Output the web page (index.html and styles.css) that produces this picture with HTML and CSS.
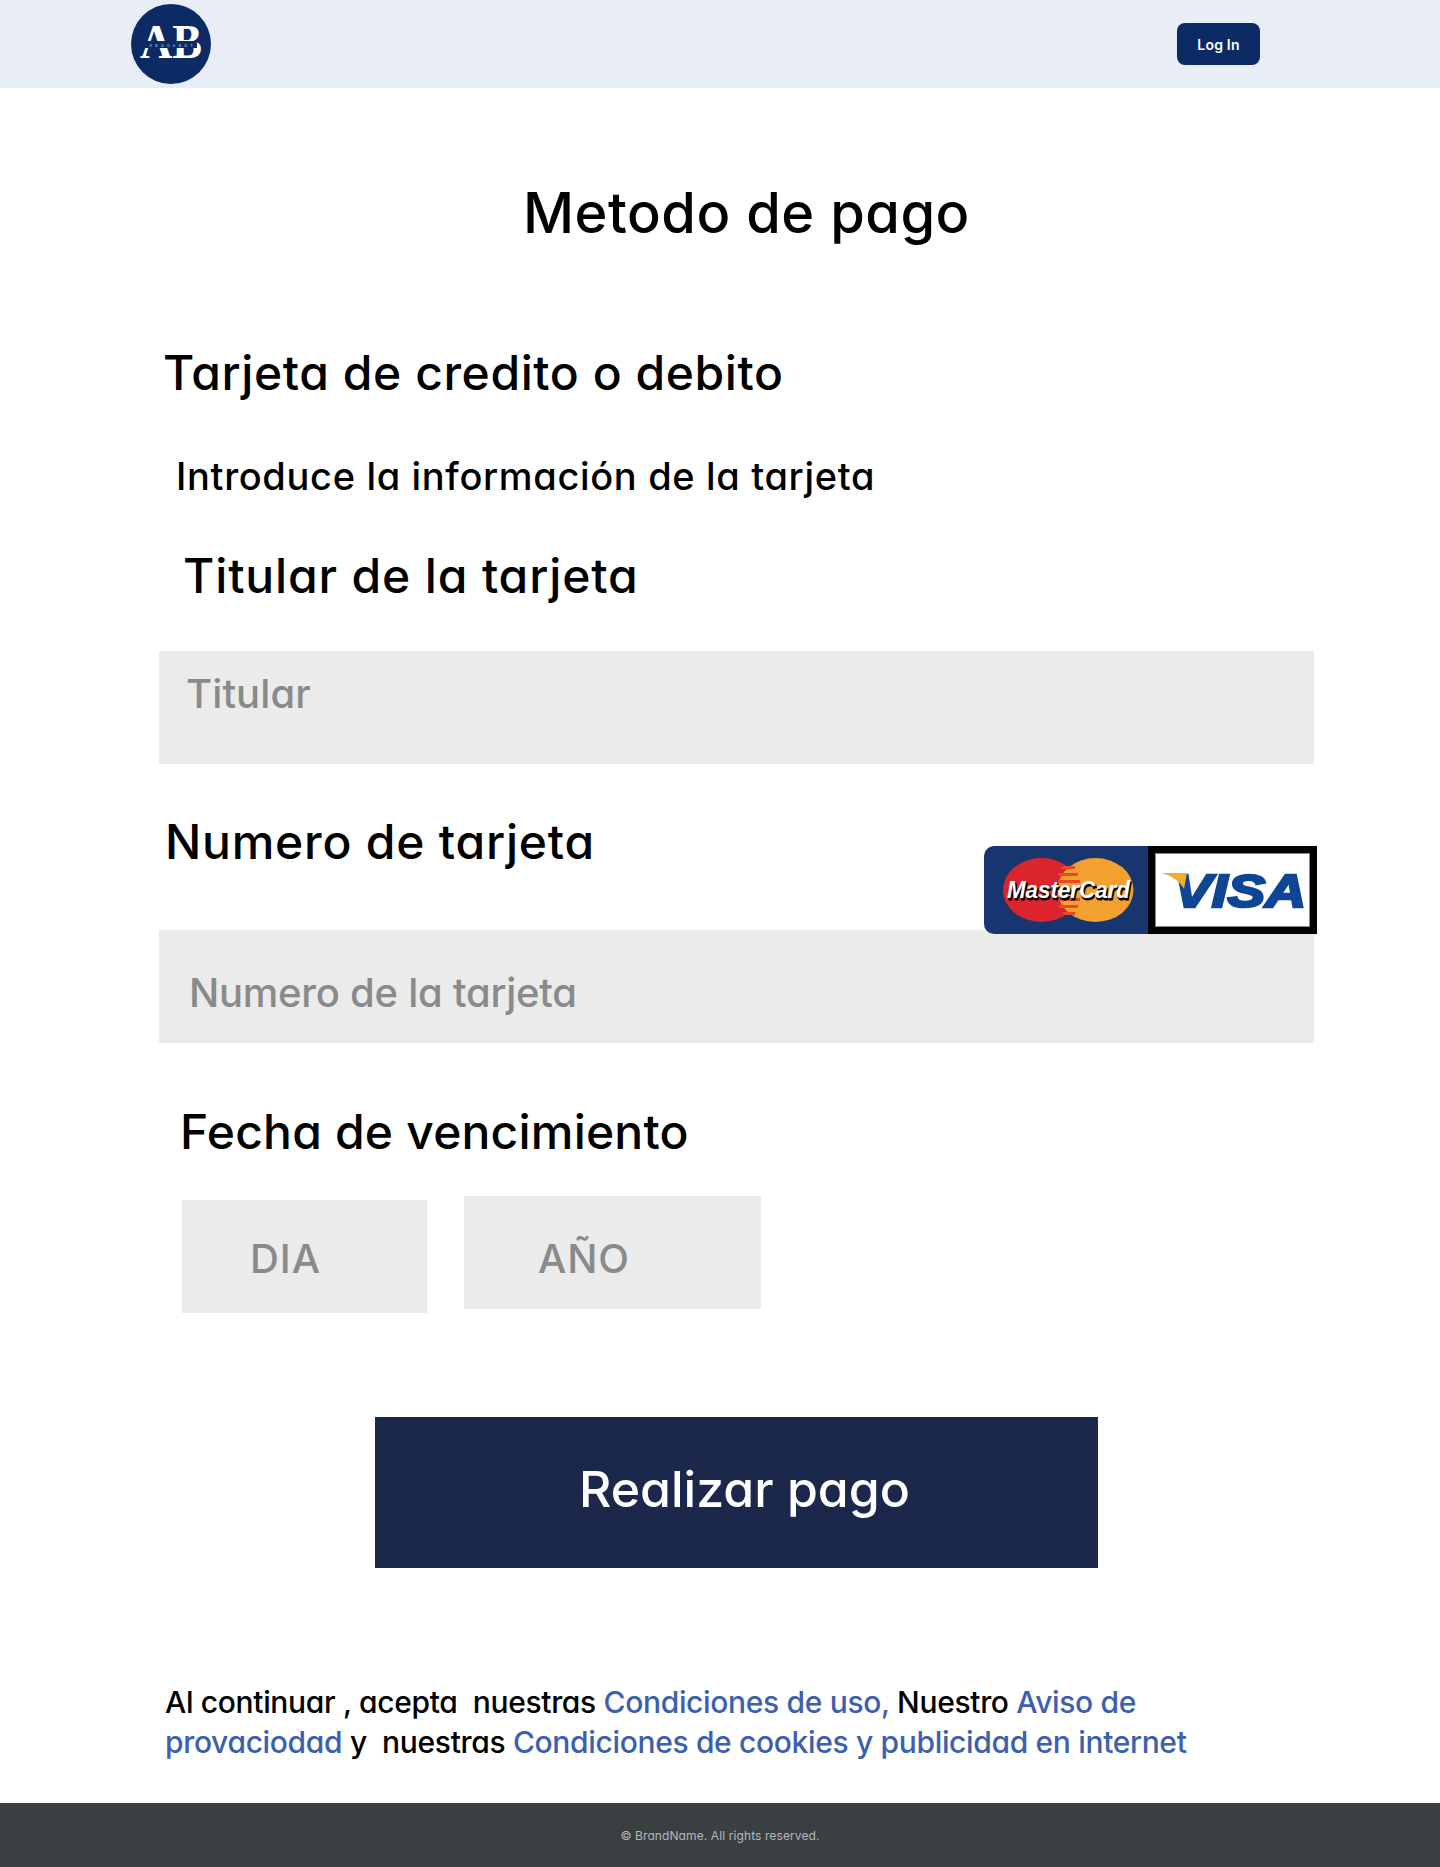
FILE: index.html
```html
<!DOCTYPE html>
<html lang="es">
<head>
<meta charset="utf-8">
<title>Metodo de pago</title>
<link rel="stylesheet" href="styles.css">
</head>
<body>
<header class="topbar">
  <svg class="logo" viewBox="0 0 80 80" aria-label="AB Abogabot">
    <circle cx="40" cy="40" r="40" fill="#0c2a63"/>
    <text class="logo-ab" x="40" y="54" text-anchor="middle" textLength="62" lengthAdjust="spacingAndGlyphs">AB</text>
    <rect x="14" y="37" width="52" height="7" fill="#0c2a63"/>
    <text class="logo-sub" x="40" y="42.500" text-anchor="middle" textLength="43">ABOGABOT</text>
  </svg>
  <a class="login" href="#">Log In</a>
</header>
<main class="page">
  <h1 class="title">Metodo de pago</h1>
  <h2 class="section">Tarjeta de credito o debito</h2>
  <p class="intro">Introduce la información de la tarjeta</p>
  <h3 class="label label-holder">Titular de la tarjeta</h3>
  <div class="field field-holder">Titular</div>
  <div class="number-block">
    <h3 class="label label-number">Numero de tarjeta</h3>
    <svg class="cards" viewBox="0 0 333 88" aria-label="MasterCard, Visa">
      <path d="M10 0H165V88H10A10 10 0 0 1 0 78V10A10 10 0 0 1 10 0Z" fill="#17366f"/>
      <ellipse cx="57.500" cy="44" rx="38.500" ry="32" fill="#dc242c"/>
      <ellipse cx="111.500" cy="44" rx="38" ry="32" fill="#f2a02f"/>
      <path d="M79 20H91V23H76ZM75 27H94V30H74ZM74 34H96V37H74ZM74 52H96V55H74ZM75 59H94V62H75ZM78 66H91V69H80Z" fill="#e8492c"/>
      <text class="mc mc-shadow" x="85.500" y="53.500" text-anchor="middle" textLength="123" lengthAdjust="spacingAndGlyphs">MasterCard</text>
      <text class="mc" x="84.500" y="52" text-anchor="middle" textLength="123" lengthAdjust="spacingAndGlyphs">MasterCard</text>
      <rect x="167.500" y="3.500" width="162" height="81" fill="#fff" stroke="#000" stroke-width="7"/>
      <rect x="171.500" y="7.500" width="154" height="73" fill="none" stroke="#888" stroke-width="1"/>
      <text class="visa" x="256" y="61" text-anchor="middle" textLength="132" lengthAdjust="spacingAndGlyphs">VISA</text>
      <path d="M178 27H203L200 43Q194 32 178 27Z" fill="#f2ac33"/>
    </svg>
  </div>
  <div class="field field-number">Numero de la tarjeta</div>
  <h3 class="label label-date">Fecha de vencimiento</h3>
  <div class="date-row">
    <div class="field field-day">DIA</div>
    <div class="field field-year">AÑO</div>
  </div>
  <a class="pay" href="#">Realizar pago</a>
  <p class="legal">Al continuar , acepta&nbsp; nuestras <a href="#">Condiciones de uso,</a> Nuestro <a href="#">Aviso de provaciodad</a> y&nbsp; nuestras <a href="#">Condiciones de cookies y publicidad en internet</a></p>
</main>
<footer class="footer">© BrandName. All rights reserved.</footer>
</body>
</html>
```
FILE: styles.css
```css
* { box-sizing: border-box; }
html, body { margin: 0; padding: 0; }
body { font-family: Inter, "Noto Sans", sans-serif; font-feature-settings: "cv11"; color: #000; background: #fff; }
a { text-decoration: none; }
.topbar { height: 88px; background: #e8edf6; display: flex; align-items: center; justify-content: space-between; padding: 0 180px 0 131px; }
.logo { width: 80px; height: 80px; display: block; }
.logo-ab { font-family: "Liberation Serif", serif; font-size: 48px; font-weight: 700; fill: #fff; }
.logo-sub { font-family: Inter, sans-serif; font-size: 3.500px; fill: #d5dcec; }
.login { width: 83px; height: 42px; border-radius: 8px; background: #0c2a63; color: #fff; font-size: 14px; font-weight: 600; letter-spacing: 0.200px; display: flex; align-items: center; justify-content: center; }
.page { display: flex; flex-direction: column; align-items: flex-start; padding: 90px 126px 0 159px; height: 1715px; }
.title { margin: 0 0 0 364px; font-size: 56px; line-height: 70px; font-weight: 450; letter-spacing: 0.500px; }
.section { margin: 95px 0 0 4px; font-size: 48px; line-height: 60px; font-weight: 450; letter-spacing: 0.570px; }
.intro { margin: 49px 0 0 17px; font-size: 38px; line-height: 48px; font-weight: 450; letter-spacing: 0.660px; }
.label { margin: 0; font-size: 48px; line-height: 60px; font-weight: 450; }
.label-holder { margin: 46px 0 0 24px; letter-spacing: 0.850px; }
.field { background: #ebebeb; height: 113px; color: #8a8a8a; font-size: 40px; font-weight: 450; }
.field-holder { width: 1155px; margin-top: 45px; padding: 18px 0 0 27px; letter-spacing: 0.100px; }
.number-block { position: relative; width: 1155px; height: 166px; }
.label-number { margin: 48px 0 0 6px; letter-spacing: 0.770px; }
.cards { position: absolute; left: 825px; top: 82px; width: 333px; height: 88px; z-index: 1; }
.field-number { width: 1155px; padding: 38px 0 0 30px; letter-spacing: -0.250px; }
.label-date { margin: 59px 0 0 21px; letter-spacing: 0.200px; }
.date-row { display: flex; align-items: flex-start; margin: 34px 0 0 23px; gap: 37px; }
.field-day { width: 245px; margin-top: 4px; padding: 34px 0 0 68px; letter-spacing: 1px; }
.field-year { width: 297px; padding: 38px 0 0 74px; letter-spacing: 0.800px; }
.pay { width: 723px; height: 151px; margin: 104px 0 0 216px; background: #1b274b; color: #fff; font-size: 50px; font-weight: 450; padding: 42px 0 0 204px; }
.legal { margin: 115px 0 0 6px; width: 1040px; font-size: 30px; line-height: 39.500px; font-weight: 450; letter-spacing: -0.340px; }
.legal a { color: #3c5fae; }
.footer { height: 64px; background: #3a4042; color: #b4b8ba; font-size: 12px; letter-spacing: 0.100px; display: flex; align-items: center; justify-content: center; }
.mc { font-family: "Liberation Sans", sans-serif; font-size: 23px; font-weight: 700; font-style: italic; fill: #fff; }
.mc-shadow { fill: #000; stroke: #000; stroke-width: 1px; }
.visa { font-family: "Liberation Sans", sans-serif; font-size: 47px; font-weight: 700; font-style: italic; fill: #0f4595; stroke: #0f4595; stroke-width: 2.500px; }
```
